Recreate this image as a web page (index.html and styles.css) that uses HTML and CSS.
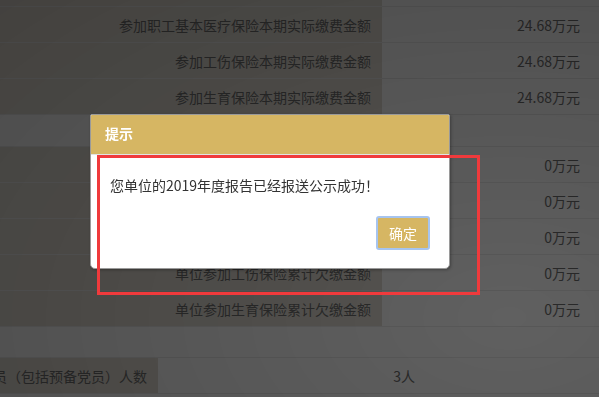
FILE: index.html
```html
<!DOCTYPE html>
<html lang="zh-CN">
<head>
    <meta charset="UTF-8">
    <meta name="viewport" content="width=device-width, initial-scale=1.0">
    <title>年度报告</title>
    <link rel="stylesheet" href="styles.css">
</head>
<body>

    <div class="sheet">
        <div class="row">
            <div class="label">参加失业保险本期实际缴费金额</div>
            <div class="value">24.68万元</div>
        </div>
        <div class="row">
            <div class="label">参加职工基本医疗保险本期实际缴费金额</div>
            <div class="value">24.68万元</div>
        </div>
        <div class="row">
            <div class="label">参加工伤保险本期实际缴费金额</div>
            <div class="value">24.68万元</div>
        </div>
        <div class="row">
            <div class="label">参加生育保险本期实际缴费金额</div>
            <div class="value">24.68万元</div>
        </div>
        <div class="row section"></div>
        <div class="row">
            <div class="label">单位参加城镇职工基本养老保险累计欠缴金额</div>
            <div class="value">0万元</div>
        </div>
        <div class="row">
            <div class="label">单位参加失业保险累计欠缴金额</div>
            <div class="value">0万元</div>
        </div>
        <div class="row">
            <div class="label">单位参加职工基本医疗保险累计欠缴金额</div>
            <div class="value">0万元</div>
        </div>
        <div class="row">
            <div class="label">单位参加工伤保险累计欠缴金额</div>
            <div class="value">0万元</div>
        </div>
        <div class="row">
            <div class="label">单位参加生育保险累计欠缴金额</div>
            <div class="value">0万元</div>
        </div>
        <div class="row band"></div>
        <div class="row party">
            <div class="label">其中：中共党员（包括预备党员）人数</div>
            <div class="value">3人</div>
            <div class="spare"></div>
        </div>
    </div>

    <div class="mask"></div>

    <div class="dialog">
        <div class="dialog-title">提示</div>
        <div class="dialog-body">您单位的2019年度报告已经报送公示成功！</div>
        <div class="dialog-foot">
            <button class="btn-ok" type="button">确定</button>
        </div>
    </div>

    <div class="mark"></div>

</body>
</html>
```

FILE: styles.css
```css
* {
    box-sizing: border-box;
    margin: 0;
    padding: 0;
}

body {
    font-family: "Noto Sans CJK SC", "Microsoft YaHei", sans-serif;
    font-size: 14px;
    color: #6e6e6e;
    background-color: #fbfbfb;
    overflow: hidden;
    height: 397px;
}

.sheet {
    margin-top: -29px;
}

.row {
    display: grid;
    grid-template-columns: 382px 1fr;
    height: 36px;
    border-bottom: 1px solid #e8e8e8;
    background-color: #fbfbfb;
}

.label,
.value {
    display: flex;
    align-items: center;
    justify-content: flex-end;
    white-space: nowrap;
    line-height: 20px;
}

.label {
    background-color: #e0dbd2;
    padding-right: 11px;
}

.value {
    padding-right: 19px;
}

.section {
    height: 32px;
}

.band {
    height: 31px;
}

.party {
    grid-template-columns: 158px 277px 1fr;
}

.party .value {
    padding-right: 20px;
}

.mask {
    position: fixed;
    left: 0;
    top: 0;
    width: 100%;
    height: 100%;
    background: radial-gradient(ellipse at 85% 80%, rgba(0, 0, 0, 0.62), rgba(0, 0, 0, 0.7));
}

.dialog {
    position: absolute;
    left: 90px;
    top: 114px;
    width: 360px;
    height: 155px;
    background-color: #fff;
    border-radius: 2px 2px 5px 5px;
    border: 1px solid #9a9a9a;
    box-shadow: 1px 1px 3px rgba(0, 0, 0, 0.3);
    overflow: hidden;
}

.dialog-title {
    height: 40px;
    line-height: 36px;
    padding-left: 14px;
    background-color: #d6b663;
    border-bottom: 1px solid #e2e2e2;
    color: #fff;
    font-weight: bold;
}

.dialog-body {
    padding: 20px 0 0 19px;
    line-height: 20px;
    color: #333;
}

.dialog-foot {
    display: flex;
    justify-content: flex-end;
    padding: 21px 19px 0 0;
}

.btn-ok {
    width: 54px;
    height: 34px;
    border: 2px solid #a6c4ef;
    border-radius: 3px;
    background-color: #d6b663;
    color: #fff;
    font-family: inherit;
    font-size: 14px;
}

.mark {
    position: absolute;
    left: 97px;
    top: 155px;
    width: 383px;
    height: 140px;
    border: 3px solid #f03a3c;
}
```
